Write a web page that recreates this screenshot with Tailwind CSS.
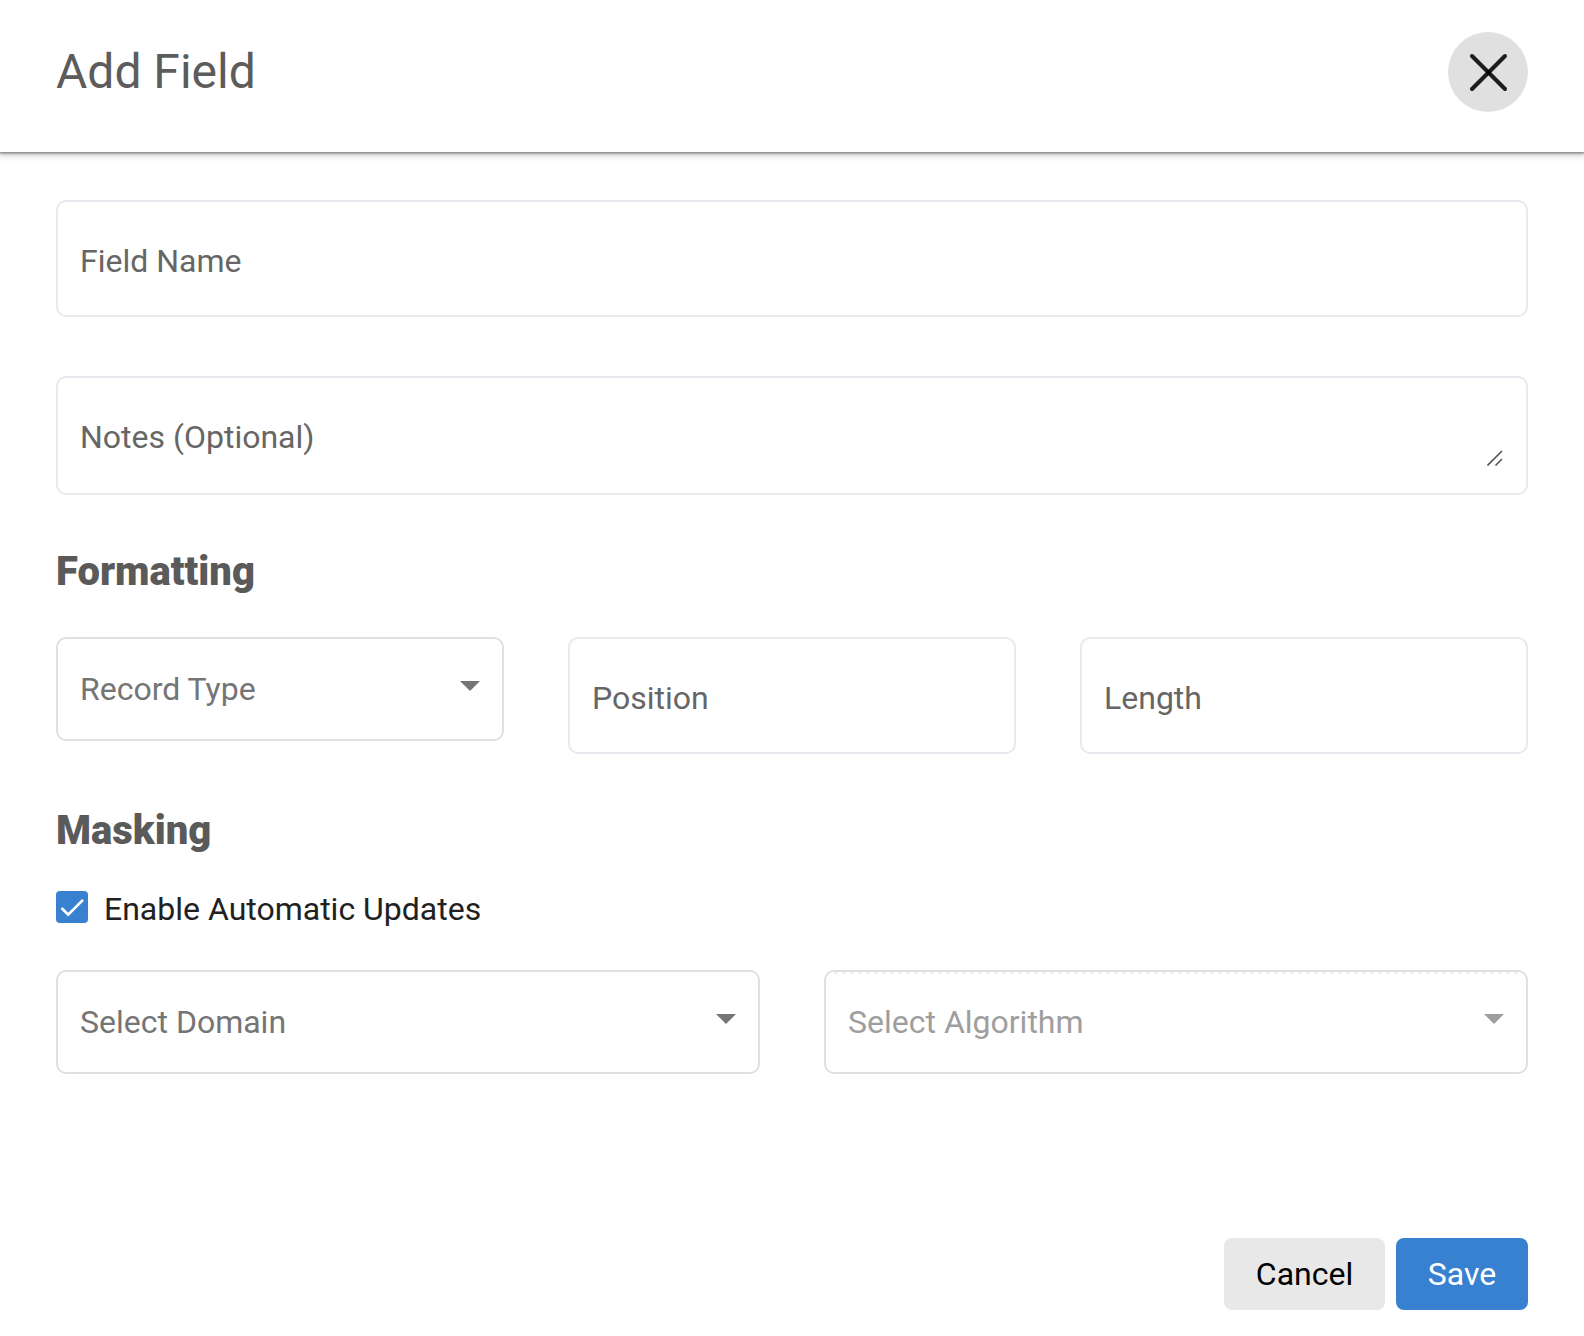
<!DOCTYPE html>
<html lang="en">
<head>
    <meta charset="UTF-8">
    <meta name="viewport" content="width=device-width, initial-scale=1.0">
    <title>Add Field</title>
    <script src="https://cdn.jsdelivr.net/npm/@tailwindcss/browser@4"></script>
</head>
<body class="overflow-x-hidden bg-white font-[Roboto,sans-serif] text-[32px] leading-[38px] text-[#212121]">
    <header class="flex h-[152px] items-start justify-between px-14 pt-8 shadow-[0_0_3px_1px_rgba(0,0,0,0.5),0_0_8px_2px_rgba(0,0,0,0.24)]">
        <h1 class="text-[48px] leading-[79px] text-[#5c5c5c]">Add Field</h1>
        <button type="button" aria-label="Close" class="size-20 rounded-full bg-[#e0e0e0]">
            <svg class="size-20" viewBox="0 0 80 80" fill="none" stroke="#000" stroke-opacity="0.87" stroke-width="4" stroke-linecap="round">
                <path d="M24 24L57 57"/>
                <path d="M57 24L24 57"/>
            </svg>
        </button>
    </header>
    <form id="fieldForm" class="px-14 pt-12">
        <input type="text" name="fieldName" placeholder="Field Name" class="block h-[117px] w-full rounded-[10px] border-2 border-[#e8e8ee] px-[22px] pt-[5px] placeholder:text-[#666]">
        <div class="relative mt-[59px]">
            <textarea name="notes" placeholder="Notes (Optional)" class="block h-[119px] w-full resize-none overflow-hidden rounded-[10px] border-2 border-[#e8e8ee] px-[22px] pt-10 placeholder:text-[#666]"></textarea>
            <svg class="absolute right-[25px] bottom-[29px] size-4" viewBox="0 0 16 16" fill="none" stroke="#555" stroke-width="1.6">
                <path d="M0.5 15.5L15 1M8.5 15.5L15 9"/>
            </svg>
        </div>

        <h2 class="mt-[53px] text-[40px] leading-[48px] font-black text-[#5a5a5a]">Formatting</h2>
        <div class="mt-[41px] grid grid-cols-3 items-start gap-16">
            <div class="flex h-[104px] items-center justify-between rounded-[10px] border-2 border-[#e0e0e0] px-[22px] text-[#757575]">
                <span>Record Type</span>
                <svg class="mb-1.5 h-2.5 w-5" viewBox="0 0 20 10" fill="currentColor"><path d="M0 0h20L10 10z"/></svg>
            </div>
            <input type="text" name="position" placeholder="Position" class="h-[117px] w-full rounded-[10px] border-2 border-[#e8e8ee] px-[22px] pt-[5px] placeholder:text-[#666]">
            <input type="text" name="length" placeholder="Length" class="h-[117px] w-full rounded-[10px] border-2 border-[#e8e8ee] px-[22px] pt-[5px] placeholder:text-[#666]">
        </div>

        <h2 class="mt-[53px] text-[40px] leading-[48px] font-black text-[#5a5a5a]">Masking</h2>
        <div class="mt-[35px] flex h-[38px] items-start gap-4">
            <svg class="mt-px size-8 rounded bg-[#3880d0]" viewBox="0 0 32 32" fill="none" stroke="#fff" stroke-width="2.7">
                <path d="M5.5 17L12.2 23.7L27 8.9"/>
            </svg>
            <span>Enable Automatic Updates</span>
        </div>
        <div class="mt-[42px] grid grid-cols-2 gap-16">
            <div class="flex h-[104px] items-center justify-between rounded-[10px] border-2 border-[#e0e0e0] px-[22px] text-[#757575]">
                <span>Select Domain</span>
                <svg class="mb-1.5 h-2.5 w-5" viewBox="0 0 20 10" fill="currentColor"><path d="M0 0h20L10 10z"/></svg>
            </div>
            <div class="relative flex h-[104px] items-center justify-between rounded-[10px] border-2 border-[#e0e0e0] px-[22px] text-[#9e9e9e]">
                <!-- dotted underline of the disabled select -->
                <span class="absolute top-0 right-2 left-2 h-0.5 bg-[repeating-linear-gradient(to_right,#eeeeee_0_3px,transparent_3px_8px)]"></span>
                <span>Select Algorithm</span>
                <svg class="mb-1.5 h-2.5 w-5" viewBox="0 0 20 10" fill="currentColor"><path d="M0 0h20L10 10z"/></svg>
            </div>
        </div>

        <div class="mt-[164px] flex justify-end gap-[11px]">
            <button type="button" class="h-[72px] w-[161px] rounded-lg bg-[#e8e8e8] text-black">Cancel</button>
            <button type="submit" class="h-[72px] w-[132px] rounded-lg bg-[#3880d0] text-white">Save</button>
        </div>
    </form>
</body>
</html>
